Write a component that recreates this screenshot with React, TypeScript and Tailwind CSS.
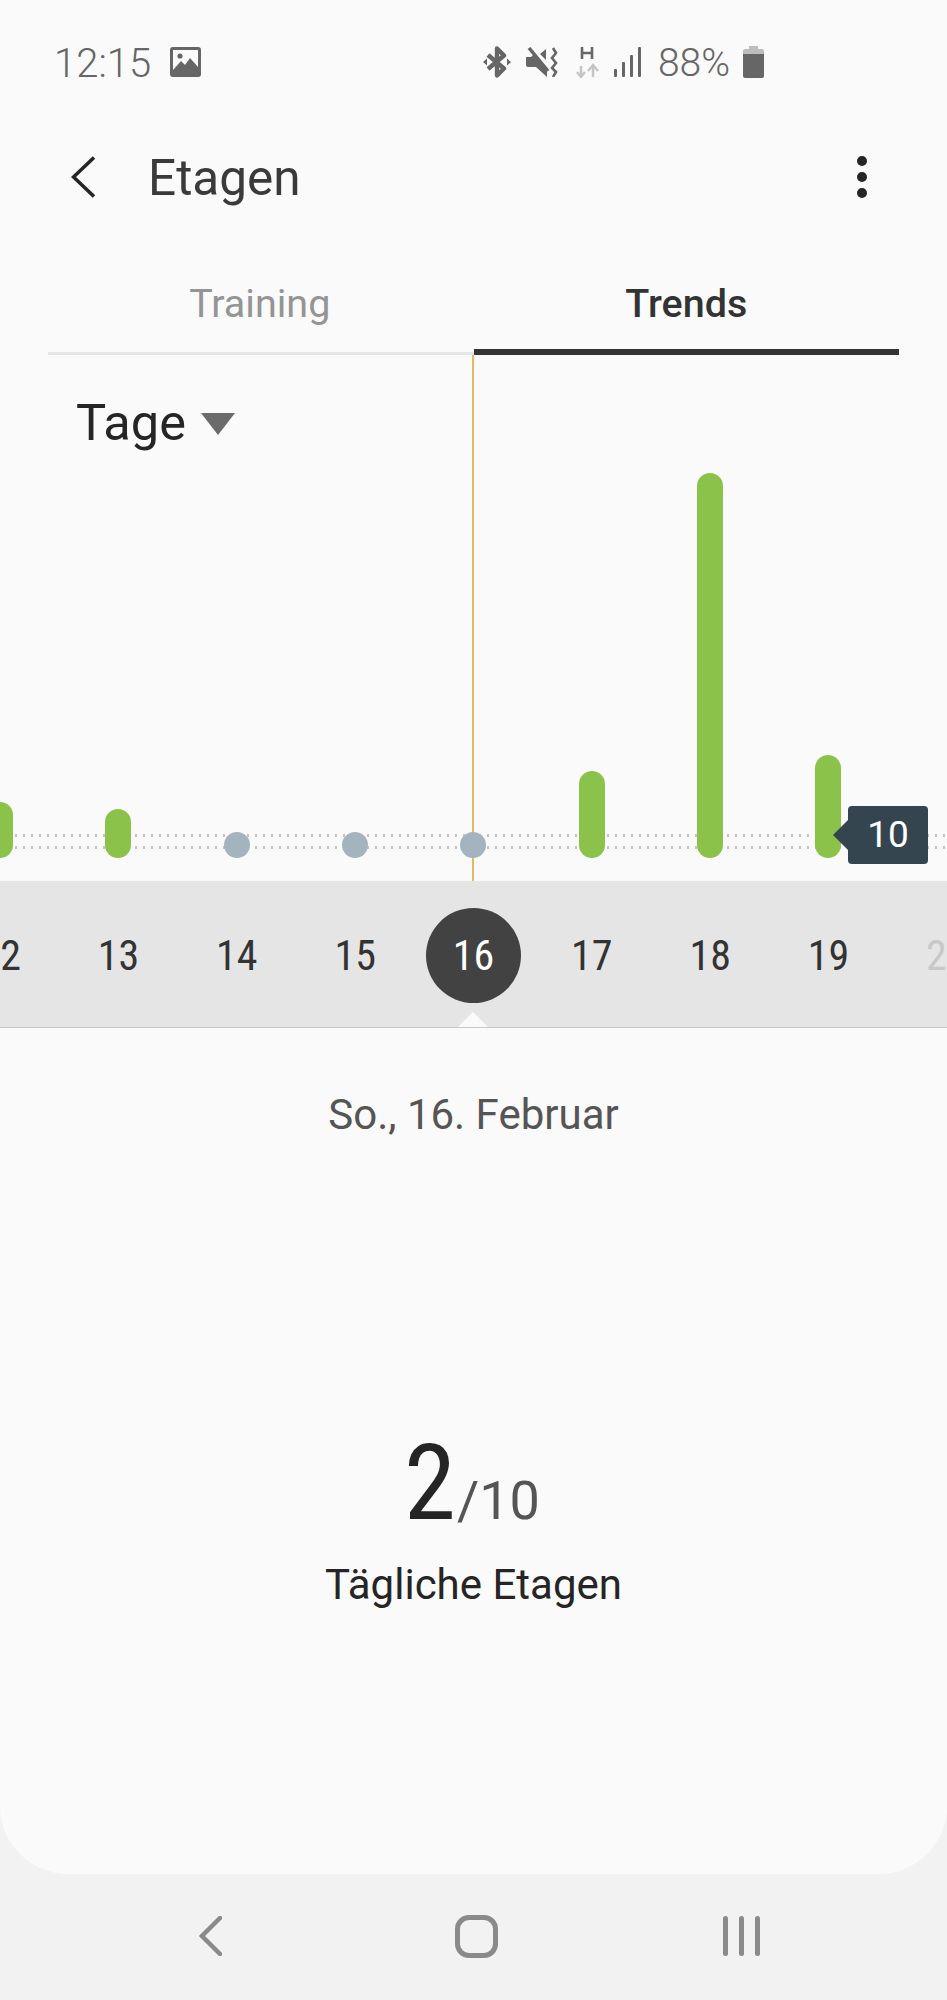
import React from 'react';

const font = "font-['Roboto',sans-serif]";

const bars = [
  { day: 12, top: 56 },
  { day: 13, top: 49 },
  { day: 14, top: 26 },
  { day: 15, top: 26 },
  { day: 16, top: 26 },
  { day: 17, top: 87 },
  { day: 18, top: 385 },
  { day: 19, top: 103 },
  { day: 20, top: 0 },
];

const StatusIcons = () => (
  <div className="flex items-center">
    {/* bluetooth */}
    <svg width="28" height="32" viewBox="0 0 28 32">
      <path d="M5 9 L21 22.5 L14 29.5 V2.5 L21 9.5 L5 23" fill="none" stroke="#666" strokeWidth="4.4" strokeLinejoin="round" />
      <path d="M0 16 L4 12.5 V19.5Z M28 16 L24 12.5 V19.5Z" fill="#666" />
    </svg>
    {/* vibrate / mute */}
    <svg width="32" height="30" viewBox="0 0 32 30" className="ml-[15px]">
      <path d="M0 10 H5 L8 7 L21 22 V30 L10 20 H2 Q0 20 0 18Z M14 7 L20 2 V13Z" fill="#666" />
      <path d="M3 1 L22 24" stroke="#666" strokeWidth="3.5" />
      <path d="M27 1 L30 6 L26 11 L30 16 L26 21 L30 25 L27 30" fill="none" stroke="#666" strokeWidth="2.6" />
    </svg>
    {/* data H with arrows */}
    <svg width="23" height="32" viewBox="0 0 23 32" className="ml-[18px]">
      <path d="M6 1 V13 M16 1 V13 M6 7 H16" stroke="#666" strokeWidth="2.6" fill="none" />
      <path d="M5 20 V31 M1 26 L5 31 L9 26" stroke="#c4c4c4" strokeWidth="2.4" fill="none" />
      <path d="M17 31 V20 M12 25 L17 19 L22 25" stroke="#c4c4c4" strokeWidth="2.4" fill="none" />
    </svg>
    {/* signal */}
    <svg width="27" height="30" viewBox="0 0 27 30" className="ml-[15px]">
      <rect x="0" y="22" width="3" height="8" rx="1" fill="#666" />
      <rect x="8" y="15" width="3" height="15" rx="1" fill="#666" />
      <rect x="16" y="8" width="3" height="22" rx="1" fill="#666" />
      <rect x="24" y="0" width="3" height="30" rx="1" fill="#666" />
    </svg>
    <span className="ml-[17px] pt-[2px] text-[39px] leading-none font-light text-[#666]">88%</span>
    {/* battery */}
    <svg width="21" height="32" viewBox="0 0 21 32" className="ml-[13px]">
      <path d="M6 0 H15 V3 H19 Q21 3 21 5 V8 H0 V5 Q0 3 2 3 H6Z" fill="#bdbdbd" />
      <path d="M0 8 H21 V30 Q21 32 19 32 H2 Q0 32 0 30Z" fill="#666" />
    </svg>
  </div>
);

const App: React.FC = () => {
  return (
    <div className={`${font} relative flex h-[2000px] w-[947px] flex-col overflow-hidden bg-[#f2f2f2]`}>
      <div className="flex h-[1874px] flex-col overflow-hidden rounded-b-[68px] bg-[#fafafa]">
        {/* Status bar */}
        <div className="flex h-[124px] items-center justify-between pr-[183px] pl-[54px]">
          <div className="flex items-center">
            <span className="pt-[3px] text-[40px] leading-none font-light text-[#666]">12:15</span>
            <svg width="31" height="30" viewBox="0 0 31 30" className="ml-[19px]">
              <rect width="31" height="30" rx="3" fill="#666" />
              <rect x="3" y="3" width="25" height="24" fill="#fafafa" />
              <path d="M3 23 L11 14 L15 18 L20 11 L28 20 V27 H3Z" fill="#666" />
              <circle cx="10" cy="9" r="2.6" fill="#666" />
            </svg>
          </div>
          <StatusIcons />
        </div>

        {/* Title bar */}
        <div className="flex h-[105px] items-center pr-[80px] pl-[71px]">
          <svg width="25" height="42" viewBox="0 0 25 42">
            <path d="M23 1.5 L2.5 21 L23 40.5" fill="none" stroke="#252525" strokeWidth="3.6" />
          </svg>
          <h1 className="ml-[52px] pt-[4px] text-[49.5px] leading-none text-[#3a3a3a]">Etagen</h1>
          <div className="ml-auto flex flex-col gap-[6px]">
            <div className="h-[10px] w-[10px] rounded-full bg-[#252525]"></div>
            <div className="h-[10px] w-[10px] rounded-full bg-[#252525]"></div>
            <div className="h-[10px] w-[10px] rounded-full bg-[#252525]"></div>
          </div>
        </div>

        {/* Tabs */}
        <div className="ml-[48px] grid h-[126px] w-[851px] grid-cols-2">
          <div className="flex items-center justify-center border-b-[3px] border-[#e5e5e5] pt-[27px] pr-[2px] text-[39.5px] text-[#949494]">
            Training
          </div>
          <div className="flex items-center justify-center border-b-[6px] border-[#333] pt-[30px] text-[39.5px] font-medium text-[#333]">
            Trends
          </div>
        </div>

        {/* Chart */}
        <div className="relative h-[526px] overflow-hidden">
          <div className="absolute top-0 left-[472px] h-full w-[2px] bg-[#dcbc64]"></div>
          <div className="absolute top-[479px] left-0 h-[3px] w-full bg-[radial-gradient(circle,#c4c4c4_1.2px,transparent_1.4px)] bg-size-[8px_3px] bg-position-[4px_0]"></div>
          <div className="absolute top-[491px] left-0 h-[3px] w-full bg-[radial-gradient(circle,#c4c4c4_1.2px,transparent_1.4px)] bg-size-[8px_3px] bg-position-[4px_0]"></div>

          <div className="relative flex items-center pt-[38px] pl-[76px]">
            <span className="text-[50.5px] leading-[60px] text-[#252525]">Tage</span>
            <div className="mt-[2px] ml-[15px] h-0 w-0 border-x-[17px] border-t-[22px] border-x-transparent border-t-[#6b6b6b]"></div>
          </div>

          <div className="absolute bottom-[23px] left-[-59px] grid w-[1065px] grid-cols-9 items-end">
            {bars.map((b) => (
              <div key={b.day} className="flex justify-center">
                {b.top > 0 && (
                  <div
                    className={`w-[26px] rounded-full ${b.top === 26 ? 'bg-[#a3b4be]' : 'bg-[#8bc34a]'}`}
                    style={{ height: b.top }}
                  ></div>
                )}
              </div>
            ))}
          </div>

          {/* Goal tooltip */}
          <div className="absolute top-[451px] left-[848px] flex h-[58px] w-[80px] items-center justify-center rounded-[4px] bg-[#34454f] text-[37px] text-white">
            10
            <div className="absolute top-[14px] left-[-15px] h-0 w-0 border-y-[15px] border-r-[15px] border-y-transparent border-r-[#34454f]"></div>
          </div>
        </div>

        {/* Date strip */}
        <div className="relative h-[147px] overflow-hidden border-b border-[#c8c8c8] bg-[#e5e5e5]">
          <div className="ml-[-59px] grid h-full w-[1065px] grid-cols-9 items-center pt-[2px]">
            {bars.map((b) => (
              <div key={b.day} className="flex justify-center">
                {b.day === 16 ? (
                  <div className="flex h-[95px] w-[95px] items-center justify-center rounded-full bg-[#424242] text-[42px] text-white [font-stretch:condensed]">
                    16
                  </div>
                ) : (
                  <span className={`text-[42px] [font-stretch:condensed] ${b.day === 20 ? 'text-[#c8c8c8]' : 'text-[#333]'}`}>
                    {b.day}
                  </span>
                )}
              </div>
            ))}
          </div>
          <div className="absolute bottom-[-1px] left-[457px] h-0 w-0 border-x-[16px] border-b-[16px] border-x-transparent border-b-[#fafafa]"></div>
        </div>

        {/* Day detail */}
        <div className="flex flex-1 flex-col items-center">
          <div className="mt-[61px] text-[42px] leading-[52px] text-[#555]">So., 16. Februar</div>
          <div className="mt-[283px] flex items-baseline leading-none">
            <span className="text-[105px] leading-[120px] text-[#252525] [font-stretch:condensed]">2</span>
            <span className="mr-[3px] ml-[1px] text-[54px] text-[#555]">/10</span>
          </div>
          <div className="mt-[15px] text-[42px] leading-[52px] text-[#252525]">Tägliche Etagen</div>
        </div>
      </div>

      {/* Navigation bar */}
      <div className="flex flex-1 items-center justify-center pb-[2px] pl-[12px]">
        <svg width="23" height="40" viewBox="0 0 23 40" className="mr-[233px]">
          <path d="M21 2 L3 20 L21 38" fill="none" stroke="#8a8a8a" strokeWidth="4.5" strokeLinecap="round" />
        </svg>
        <div className="h-[43px] w-[43px] rounded-[14px] border-[5px] border-[#8a8a8a]"></div>
        <div className="ml-[225px] flex gap-[11px]">
          <div className="h-[40px] w-[5px] rounded-full bg-[#8a8a8a]"></div>
          <div className="h-[40px] w-[5px] rounded-full bg-[#8a8a8a]"></div>
          <div className="h-[40px] w-[5px] rounded-full bg-[#8a8a8a]"></div>
        </div>
      </div>
    </div>
  );
};

export default App;
